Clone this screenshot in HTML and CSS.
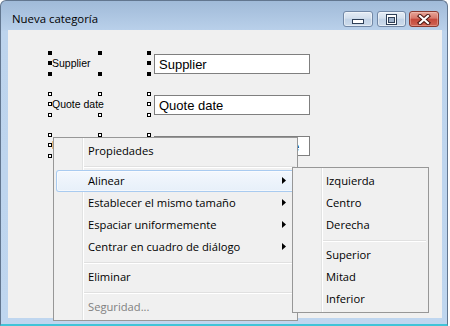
FILE: index.html
```html
<!DOCTYPE html>
<html lang="es">
<head>
<meta charset="utf-8">
<title>Nueva categoría</title>
<link rel="stylesheet" href="styles.css">
</head>
<body>
<div class="window">
  <div class="titlebar">
    <span class="title">Nueva categoría</span>
    <div class="caption-btns">
      <div class="cbtn min">
        <svg width="12" height="5" viewBox="0 0 12 5"><rect x="0.5" y="0.5" width="11" height="4" fill="#fff" stroke="#2e3f57"/></svg>
      </div>
      <div class="cbtn max">
        <svg width="11" height="11" viewBox="0 0 11 11"><rect x="0.5" y="0.5" width="10" height="10" fill="#fff" stroke="#2e3f57"/><rect x="2.5" y="3.5" width="6" height="5" fill="#9fb2ca" stroke="#2e3f57"/></svg>
      </div>
      <div class="cbtn close">
        <svg width="14" height="11" viewBox="0 0 14 11"><path d="M3 2L11 9M11 2L3 9" stroke="#4a1510" stroke-width="4.2" stroke-linecap="square"/><path d="M3 2L11 9M11 2L3 9" stroke="#fff" stroke-width="2.2" stroke-linecap="square"/></svg>
      </div>
    </div>
  </div>
  <div class="client">
    <div class="form">
      <div class="row">
        <div class="lbl sel primary">Supplier
          <i class="h tl"></i><i class="h ml"></i><i class="h bl"></i><i class="h tr"></i><i class="h br"></i>
        </div>
        <div class="ctl sel primary">
          <div class="tb">Supplier</div>
          <i class="h tl"></i><i class="h ml"></i><i class="h bl"></i>
        </div>
      </div>
      <div class="row">
        <div class="lbl sel">Quote date
          <i class="h tl"></i><i class="h ml"></i><i class="h bl"></i><i class="h tr"></i><i class="h br"></i>
        </div>
        <div class="ctl sel">
          <div class="tb">Quote date</div>
          <i class="h tl"></i><i class="h ml"></i><i class="h bl"></i>
        </div>
      </div>
      <div class="row">
        <div class="lbl sel">Delivery
          <i class="h tl"></i><i class="h ml"></i><i class="h bl"></i><i class="h tr"></i><i class="h br"></i>
        </div>
        <div class="ctl sel">
          <div class="tb">Requested delivery date</div>
          <i class="h tl"></i><i class="h ml"></i><i class="h bl"></i>
        </div>
      </div>
    </div>

    <div class="menu main-menu">
      <div class="item">Propiedades</div>
      <div class="sep"></div>
      <div class="item hot"><span>Alinear</span><svg class="arrow" width="4" height="7" viewBox="0 0 4 7"><path d="M0 0L4 3.5L0 7Z"/></svg></div>
      <div class="item"><span>Establecer el mismo tamaño</span><svg class="arrow" width="4" height="7" viewBox="0 0 4 7"><path d="M0 0L4 3.5L0 7Z"/></svg></div>
      <div class="item"><span>Espaciar uniformemente</span><svg class="arrow" width="4" height="7" viewBox="0 0 4 7"><path d="M0 0L4 3.5L0 7Z"/></svg></div>
      <div class="item"><span>Centrar en cuadro de diálogo</span><svg class="arrow" width="4" height="7" viewBox="0 0 4 7"><path d="M0 0L4 3.5L0 7Z"/></svg></div>
      <div class="sep"></div>
      <div class="item">Eliminar</div>
      <div class="sep"></div>
      <div class="item disabled">Seguridad...</div>
    </div>

    <div class="menu sub-menu">
      <div class="item">Izquierda</div>
      <div class="item">Centro</div>
      <div class="item">Derecha</div>
      <div class="sep"></div>
      <div class="item">Superior</div>
      <div class="item">Mitad</div>
      <div class="item">Inferior</div>
    </div>
  </div>
</div>
</body>
</html>
```

FILE: styles.css
```css
* { box-sizing: border-box; }
html, body { margin: 0; padding: 0; }
body {
  width: 450px;
  height: 326px;
  overflow: hidden;
  background: #ffffff;
  font-family: "Open Sans", "Noto Sans", sans-serif;
}

.window {
  width: 448px;
  height: 326px;
  display: flex;
  flex-direction: column;
  padding: 0 5px 6px 7px;
  border: 1px solid #62768f;
  border-bottom: 2px solid #40c4d8;
  border-radius: 6px 6px 0 0;
  background: linear-gradient(#a0bad8 0px, #b9d0ea 29px, #bdd4ed 30px, #bfd6ef 100%);
}

.titlebar {
  height: 29px;
  flex: none;
  display: flex;
  justify-content: space-between;
  align-items: flex-start;
}
.title {
  margin-top: 10px;
  margin-left: 4px;
  font-size: 11.4px;
  line-height: 16px;
  color: #000;
}
.caption-btns {
  display: flex;
  margin-top: 10px;
  margin-right: 3px;
}
.cbtn {
  height: 16px;
  border-radius: 3px;
  display: flex;
  justify-content: center;
}
.cbtn.min, .cbtn.max {
  border: 1px solid #7288a6;
  background: linear-gradient(#e4ecf5 0%, #d3dfed 45%, #c1d2e6 50%, #cddbeb 100%);
  box-shadow: inset 0 0 0 1px rgba(255,255,255,0.45);
}
.cbtn.min { width: 30px; margin-right: 4px; align-items: flex-end; padding-bottom: 2px; }
.cbtn.max { width: 29px; margin-right: 3px; align-items: center; }
.cbtn.close {
  width: 30px;
  border: 1px solid #8a3a30;
  background: linear-gradient(#e7a699 0%, #d7776a 45%, #c4483a 50%, #cf6455 100%);
  box-shadow: inset 0 0 0 1px rgba(255,220,210,0.35);
  align-items: center;
}
.cbtn svg { display: block; }

.client {
  flex: 1;
  position: relative;
  background: #f0f0f0;
}

.form {
  display: flex;
  flex-direction: column;
  gap: 20px;
  padding: 23px 0 0 42px;
}
.row {
  display: flex;
  height: 21px;
}
.sel { position: relative; }
.lbl {
  width: 50px;
  height: 21px;
  padding-left: 2px;
  font-family: "Liberation Sans", Arial, sans-serif;
  font-size: 10.5px;
  line-height: 21px;
  white-space: nowrap;
  color: #000;
}
.ctl {
  margin-left: 49px;
  padding-left: 5px;
  height: 21px;
}
.tb {
  width: 156px;
  height: 20px;
  margin-top: 1px;
  border: 1px solid #7f7f7f;
  background: #fff;
  padding: 1px 0 0 4px;
  font-family: "Liberation Sans", Arial, sans-serif;
  font-size: 13px;
  line-height: 17px;
  white-space: nowrap;
  overflow: hidden;
  color: #000;
}

.h {
  position: absolute;
  width: 4px;
  height: 4px;
  background: #fff;
  border: 1px solid #000;
}
.sel.primary .h { background: #000; }
.h.tl { left: -2px; top: -2px; }
.h.ml { left: -2px; top: 8px; }
.h.bl { left: -2px; top: 19px; }
.h.tr { right: -2px; top: -2px; }
.h.br { right: -2px; top: 19px; }

.menu {
  position: absolute;
  border: 1px solid #979797;
  padding: 2px;
  background:
    linear-gradient(to right, transparent 28px, #e2e3e3 28px, #e2e3e3 29px, #ffffff 29px, #ffffff 30px, transparent 30px),
    #f0f0f0;
  font-size: 11.2px;
  color: #000;
}
.main-menu { left: 45px; top: 107px; width: 245px; }
.sub-menu { left: 284px; top: 137px; width: 137px; }

.item {
  height: 22px;
  line-height: 22px;
  padding: 0 9px 0 32px;
  display: flex;
  align-items: center;
  justify-content: space-between;
  white-space: nowrap;
  border-radius: 3px;
}
.sub-menu .item { padding-left: 31px; }
.item.hot {
  background: linear-gradient(#f4f8fd, #e6eff9);
  box-shadow: inset 0 0 0 1px #a9cbf0, inset 0 0 0 2px rgba(255,255,255,0.55);
}
.item.disabled { color: #808080; }
.arrow { display: block; fill: #000; flex: none; margin-top: -1px; }

.sep {
  height: 8px;
  margin-left: 28px;
  background: linear-gradient(transparent 4px, #e0e0e0 4px, #e0e0e0 5px, #ffffff 5px, #ffffff 6px, transparent 6px);
}
```
